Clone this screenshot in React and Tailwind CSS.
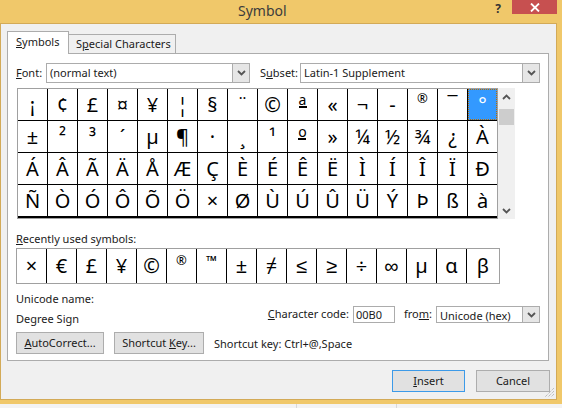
const gridRows = [
  ['¡', '¢', '£', '¤', '¥', '¦', '§', '¨', '©', 'ª', '«', '¬', '-', '®', '¯', '°'],
  ['±', '²', '³', '´', 'µ', '¶', '·', '¸', '¹', 'º', '»', '¼', '½', '¾', '¿', 'À'],
  ['Á', 'Â', 'Ã', 'Ä', 'Å', 'Æ', 'Ç', 'È', 'É', 'Ê', 'Ë', 'Ì', 'Í', 'Î', 'Ï', 'Ð'],
  ['Ñ', 'Ò', 'Ó', 'Ô', 'Õ', 'Ö', '×', 'Ø', 'Ù', 'Ú', 'Û', 'Ü', 'Ý', 'Þ', 'ß', 'à'],
];

const recentSymbols = ['×', '€', '£', '¥', '©', '®', '™', '±', '≠', '≤', '≥', '÷', '∞', 'µ', 'α', 'β'];

const uiFont = "font-['Segoe_UI','Noto_Sans',sans-serif]";

// a few glyphs sit small and high in the reference font
function Glyph({ ch }) {
  if (ch === '®') return <span className="-mt-[12px] text-[13px]">®</span>;
  if (ch === '™') return <span className="-mt-[10px] text-[14px] font-bold">™</span>;
  if (ch === 'ª' || ch === 'º') {
    return (
      <span className="-mt-[8px] flex flex-col items-center text-[14px] leading-[12px]">
        {ch === 'ª' ? 'a' : 'o'}
        <span className="h-[2px] w-[8px] bg-black" />
      </span>
    );
  }
  return ch;
}

// small chevron used by the combo boxes and the scroll bar
function Chevron({ up = false, className = '' }) {
  return (
    <svg width="9" height="6" viewBox="0 0 9 6" className={className}>
      <polyline
        points={up ? '1,5 4.5,1.5 8,5' : '1,1 4.5,4.5 8,1'}
        fill="none"
        stroke="#555"
        strokeWidth="1.8"
      />
    </svg>
  );
}

function Combo({ value, className = '' }) {
  return (
    <div className={`flex border border-[#acacac] bg-white ${className}`}>
      <div className="flex-1 truncate pl-[3px] leading-[18px]">{value}</div>
      <div className="flex w-[17px] items-center justify-center border-l border-[#acacac] bg-[#e6e6e6]">
        <Chevron />
      </div>
    </div>
  );
}

function Button({ children, className = '' }) {
  return (
    <div
      className={`flex h-[22px] items-center justify-center border bg-[#e1e1e1] ${className}`}
    >
      {children}
    </div>
  );
}

export default function App() {
  return (
    <div className={`flex h-[408px] w-[562px] flex-col overflow-hidden bg-[#f0f0f0] text-[11px] text-[#1a1a1a] ${uiFont}`}>
      {/* Window frame */}
      <div className="flex h-[404px] flex-col bg-[#f0c86a] pb-[4px] pr-[5px]">
        {/* Title bar */}
        <div className="flex h-[23px] items-start">
          <div className="pl-[238px] pt-[1px] text-[14px] leading-[20px] text-[#3c3c3c]">Symbol</div>
          <div className="ml-auto mr-[11px] pt-[2px] text-[12px] font-bold leading-[14px] text-[#333]">?</div>
          <div className="flex h-[14px] w-[45px] items-center justify-center bg-[#c75050]">
            <svg width="10" height="9" viewBox="0 0 10 9">
              <path d="M1 0.5 L9 8.5 M9 0.5 L1 8.5" stroke="#fff" strokeWidth="1.8" />
            </svg>
          </div>
        </div>

        {/* Client area */}
        <div className="relative flex flex-1 flex-col border border-[#d3aa57] bg-[#f0f0f0]">
          {/* Tabs */}
          <div className="ml-[6px] mt-[7px] flex items-end">
            <div className="relative z-10 -mb-px h-[23px] w-[62px] border border-b-0 border-[#acacac] bg-white pl-[8px] leading-[20px]">
              <u>S</u>ymbols
            </div>
            <div className="h-[19px] w-[107px] border border-b-0 border-l-0 border-[#acacac] bg-[#f0f0f0] pl-[7px] leading-[18px]">
              S<u>p</u>ecial Characters
            </div>
          </div>

          {/* Tab panel */}
          <div className="ml-[6px] flex h-[308px] w-[542px] flex-col border border-[#acacac] bg-white pl-[8px] pt-[9px]">
            <div className="flex h-[20px] items-center">
              <div className="w-[30px]">
                <u>F</u>ont:
              </div>
              <Combo value="(normal text)" className="h-[20px] w-[204px]" />
              <div className="ml-[10px] w-[40px]">
                S<u>u</u>bset:
              </div>
              <Combo value="Latin-1 Supplement" className="h-[20px] w-[240px]" />
            </div>

            {/* Character grid */}
            <div className="ml-[1px] mt-[5px] flex">
              <div className="grid grid-cols-[repeat(16,29px)] grid-rows-[repeat(4,31px)] gap-px border border-[#a0a0a0] bg-black">
                {gridRows.flat().map((ch, i) => {
                  const selected = i === 15;
                  return (
                    <div
                      key={i}
                      className={`flex items-center justify-center font-['Noto_Sans',sans-serif] text-[20px] leading-none ${
                        selected
                          ? 'bg-[#3399ff] text-white outline-1 -outline-offset-1 outline-dotted outline-[#b86b00]'
                          : 'bg-white text-black'
                      }`}
                    >
                      <Glyph ch={ch} />
                    </div>
                  );
                })}
              </div>
              <div className="flex h-[131px] w-[17px] flex-col bg-[#f0f0f0]">
                <div className="flex h-[17px] items-center justify-center">
                  <Chevron up />
                </div>
                <div className="mx-[1px] mt-[4px] h-[16px] bg-[#cdcdcd]" />
                <div className="mt-auto flex h-[17px] items-center justify-center">
                  <Chevron />
                </div>
              </div>
            </div>

            <div className="mt-[12px] h-[16px] leading-[16px]">
              <u>R</u>ecently used symbols:
            </div>
            <div className="mt-[1px] grid h-[36px] w-[484px] grid-cols-[repeat(15,29px)_1fr] gap-px border border-[#a0a0a0] bg-black">
              {recentSymbols.map((ch, i) => (
                <div
                  key={i}
                  className="flex items-center justify-center bg-white font-['Noto_Sans',sans-serif] text-[20px] leading-none text-black"
                >
                  <Glyph ch={ch} />
                </div>
              ))}
            </div>

            {/* Unicode name and character code */}
            <div className="mt-[7px] flex items-end">
              <div className="flex flex-col">
                <div className="h-[16px] leading-[16px]">Unicode name:</div>
                <div className="mt-[4px] h-[16px] leading-[16px]">Degree Sign</div>
              </div>
              <div className="mb-[4px] ml-auto mr-[8px] flex h-[17px] items-center">
                <div className="mr-[4px]">
                  <u>C</u>haracter code:
                </div>
                <div className="h-[17px] w-[42px] border border-[#acacac] bg-white pl-[2px] leading-[15px]">00B0</div>
                <div className="ml-[9px] mr-[4px]">
                  fro<u>m</u>:
                </div>
                <Combo value="Unicode (hex)" className="h-[17px] w-[104px] leading-[15px]" />
              </div>
            </div>

            <div className="mt-[5px] flex items-center">
              <Button className="w-[88px] border-[#adadad]">
                <span>
                  <u>A</u>utoCorrect...
                </span>
              </Button>
              <Button className="ml-[10px] w-[90px] border-[#adadad]">
                <span>
                  Shortcut <u>K</u>ey...
                </span>
              </Button>
              <div className="ml-[10px] mt-[2px]">Shortcut key: Ctrl+@,Space</div>
            </div>
          </div>

          {/* Dialog buttons */}
          <div className="mr-[6px] mt-[9px] flex justify-end gap-[11px]">
            <Button className="w-[73px] border-[#3c9ae8]">
              <span>
                <u>I</u>nsert
              </span>
            </Button>
            <Button className="w-[74px] border-[#adadad]">Cancel</Button>
          </div>

          {/* Size grip */}
          <svg width="10" height="10" viewBox="0 0 10 10" className="absolute bottom-[1px] right-[1px]">
            <path d="M9 3 L3 9 M9 6 L6 9 M9 0 L0 9" stroke="#a8a8a8" strokeWidth="1" strokeDasharray="1 1" />
          </svg>
        </div>
      </div>

      {/* Window behind the dialog */}
      <div className="flex h-[4px] bg-[#f3f3f3]">
        <div className="ml-[296px] h-full w-px bg-[#d8d8d8]" />
        <div className="ml-[99px] h-full w-px bg-[#d8d8d8]" />
      </div>
    </div>
  );
}
